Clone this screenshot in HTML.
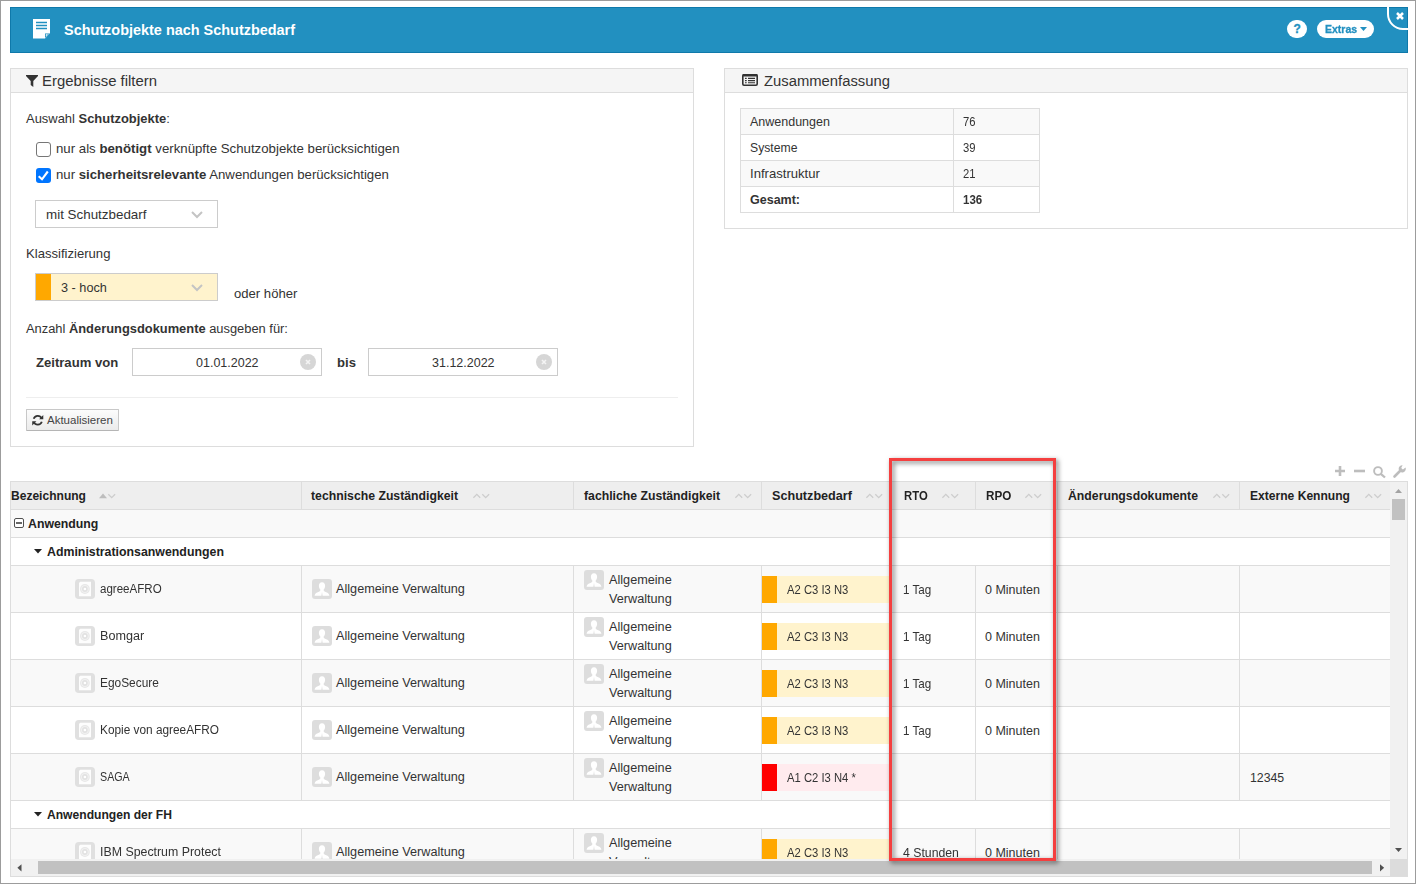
<!DOCTYPE html>
<html><head><meta charset="utf-8">
<style>
*{box-sizing:border-box;margin:0;padding:0}
html,body{width:1416px;height:884px;overflow:hidden;background:#fff}
body{font-family:"Liberation Sans",sans-serif;font-size:13px;color:#333;position:relative}
#frame{position:absolute;left:0;top:0;width:1416px;height:884px;border-style:solid;border-color:#9c9c9c;border-width:1px;z-index:50}
#hdr{position:absolute;left:10px;top:7px;width:1398px;height:46px;background:#2290c0;box-shadow:inset 0 0 0 1px #0f79aa;overflow:hidden}
.box{position:absolute}
.panel{position:absolute;border:1px solid #ddd;background:#fff}
.ph{position:absolute;left:0;top:0;right:0;height:24px;background:#f5f5f5;border-bottom:1px solid #ddd}
.t{position:absolute;white-space:nowrap;line-height:16px;height:16px;margin-top:1px}
b{font-weight:bold}
.f1{font-size:13.1px}
.f2{font-size:12.3px}
svg{position:absolute;overflow:visible}
</style></head><body>
<div id="frame"></div>

<!-- HEADER -->
<div id="hdr"><div class="box" style="left:1377px;top:-19px;width:40px;height:42px;border:2px solid #fff;border-bottom-left-radius:16px"></div></div>
<svg style="left:33px;top:19px" width="17" height="20" viewBox="0 0 17 20"><path d="M0 0H17V14L12 19.5H0Z" fill="#fff"/><path d="M3 3.5H14M3 6.5H14M3 9.5H14" stroke="#2290c0" stroke-width="1.3"/><path d="M12 14.5H16.5L12 19Z" fill="#2290c0"/><path d="M12.8 15.3H15L12.8 17.6Z" fill="#fff"/></svg>
<span class="t" style="left:64px;top:21px;color:#fff;font-weight:bold;font-size:14.45px">Schutzobjekte nach Schutzbedarf</span>
<div class="box" style="left:1287px;top:20px;width:20px;height:18px;border-radius:9px;background:#fff"></div>
<span class="t" style="left:1293.6px;top:20px;color:#2290c0;font-weight:bold;font-size:12px;-webkit-text-stroke:.3px #2290c0">?</span>
<div class="box" style="left:1317px;top:20px;width:57px;height:18px;border-radius:9px;background:#fff"></div>
<span class="t" style="left:1325px;top:20px;color:#2290c0;font-weight:bold;font-size:11.8px;transform:scaleX(.89);transform-origin:0 0;-webkit-text-stroke:.3px #2290c0">Extras</span>
<svg style="left:1359.6px;top:27px" width="7" height="4" viewBox="0 0 7 4"><path d="M0 0H7L3.5 4Z" fill="#2290c0"/></svg>
<svg style="left:1396px;top:12px" width="8" height="8" viewBox="0 0 8 8"><path d="M1 1L7 7M7 1L1 7" stroke="#fff" stroke-width="2.5"/></svg>

<!-- FILTER PANEL -->
<div class="panel" style="left:10px;top:68px;width:684px;height:379px"><div class="ph"></div></div>
<svg style="left:26px;top:74.5px" width="12" height="12" viewBox="0 0 12 12"><path d="M0 0H12V1L7.3 6V12L4.7 10V6L0 1Z" fill="#333"/></svg>
<span class="t" style="left:42px;top:72px;font-size:14.88px">Ergebnisse filtern</span>

<span class="t" style="left:26px;top:110px;font-size:12.95px">Auswahl <b>Schutzobjekte</b>:</span>
<div class="box" style="left:36px;top:142px;width:15px;height:15px;border:1.2px solid #767676;border-radius:3px;background:#fff"></div>
<span class="t" style="left:56px;top:140px;font-size:13.24px">nur als <b>benötigt</b> verknüpfte Schutzobjekte berücksichtigen</span>
<div class="box" style="left:36px;top:168px;width:15px;height:15px;border-radius:3px;background:#0075ff"></div>
<svg style="left:36px;top:168px" width="15" height="15" viewBox="0 0 15 15"><path d="M2.7 8.3L6 11.3L11.8 3.5" stroke="#fff" stroke-width="2.1" fill="none"/></svg>
<span class="t" style="left:56px;top:166px;font-size:13.2px">nur <b>sicherheitsrelevante</b> Anwendungen berücksichtigen</span>

<div class="box" style="left:35px;top:200px;width:183px;height:28px;border:1px solid #ccc;background:#fff"></div>
<span class="t" style="left:46px;top:206px;font-size:13.4px">mit Schutzbedarf</span>
<svg style="left:191px;top:210.5px" width="12" height="7" viewBox="0 0 12 7"><path d="M1 1L6 6L11 1" stroke="#c4c4c4" stroke-width="2" fill="none"/></svg>

<span class="t f1" style="left:26px;top:245px">Klassifizierung</span>
<div class="box" style="left:35px;top:273px;width:183px;height:28px;border:1px solid #ccc;background:#fff3cd"></div>
<div class="box" style="left:36px;top:274px;width:15px;height:26px;background:#ffa800"></div>
<span class="t" style="left:61px;top:279px;font-size:12.7px">3 - hoch</span>
<svg style="left:191px;top:283.5px" width="12" height="7" viewBox="0 0 12 7"><path d="M1 1L6 6L11 1" stroke="#c4c4c4" stroke-width="2" fill="none"/></svg>
<span class="t f1" style="left:234px;top:285px">oder höher</span>

<span class="t" style="left:26px;top:320px;font-size:12.88px">Anzahl <b>Änderungsdokumente</b> ausgeben für:</span>
<span class="t f1" style="left:36px;top:354px"><b>Zeitraum von</b></span>
<div class="box" style="left:132px;top:348px;width:190px;height:28px;border:1px solid #ccc;background:#fff"></div>
<span class="t" style="left:196px;top:354px;font-size:12.5px">01.01.2022</span>
<svg style="left:300px;top:354px" width="16" height="16" viewBox="0 0 16 16"><circle cx="8" cy="8" r="8" fill="#d6d6d6"/><path d="M6 6L10 10M10 6L6 10" stroke="#f4f4f4" stroke-width="1.6"/></svg>
<span class="t f1" style="left:337px;top:354px"><b>bis</b></span>
<div class="box" style="left:368px;top:348px;width:190px;height:28px;border:1px solid #ccc;background:#fff"></div>
<span class="t" style="left:432px;top:354px;font-size:12.5px">31.12.2022</span>
<svg style="left:536px;top:354px" width="16" height="16" viewBox="0 0 16 16"><circle cx="8" cy="8" r="8" fill="#d6d6d6"/><path d="M6 6L10 10M10 6L6 10" stroke="#f4f4f4" stroke-width="1.6"/></svg>

<div class="box" style="left:26px;top:397px;width:652px;height:1px;background:#eee"></div>
<div class="box" style="left:26px;top:409px;width:93px;height:22px;border:1px solid #c8c8c8;border-bottom-color:#b5b5b5;border-radius:1px;background:linear-gradient(#fcfcfc,#ebebeb)"></div>
<svg style="left:31.5px;top:413.5px" width="11.5" height="12.5" viewBox="0 0 11 12"><path d="M9.3 4.2A4.2 4.2 0 0 0 1.6 4.6M1.7 7.8A4.2 4.2 0 0 0 9.4 7.4" stroke="#333" stroke-width="1.7" fill="none"/><path d="M10.8 1V5H6.8Z M0.2 11V7H4.2Z" fill="#333"/></svg>
<span class="t" style="left:47px;top:411px;font-size:11.5px;color:#444">Aktualisieren</span>

<!-- SUMMARY PANEL -->
<div class="panel" style="left:724px;top:68px;width:684px;height:161px"><div class="ph"></div></div>
<svg style="left:742px;top:74px" width="16" height="12" viewBox="0 0 16 12"><rect x=".8" y=".8" width="14.4" height="10.4" rx="1.2" fill="none" stroke="#333" stroke-width="1.6"/><rect x=".5" y="0" width="15" height="2.6" rx="1" fill="#333"/><path d="M3 4.4H4.7M6 4.4H13M3 6.6H4.7M6 6.6H13M3 8.8H4.7M6 8.8H13" stroke="#333" stroke-width="1.1"/></svg>
<span class="t" style="left:764px;top:72px;font-size:14.82px">Zusammenfassung</span>
<div class="box" style="left:740px;top:108px;width:300px;height:105px;border:1px solid #ddd;background:#fff"></div>
<div class="box" style="left:741px;top:109px;width:298px;height:25px;background:#f9f9f9"></div>
<div class="box" style="left:741px;top:161px;width:298px;height:25px;background:#f9f9f9"></div>
<div class="box" style="left:741px;top:134px;width:298px;height:1px;background:#ddd"></div>
<div class="box" style="left:741px;top:160px;width:298px;height:1px;background:#ddd"></div>
<div class="box" style="left:741px;top:186px;width:298px;height:1px;background:#ddd"></div>
<div class="box" style="left:953px;top:109px;width:1px;height:103px;background:#ddd"></div>
<span class="t" style="left:750px;top:113px;font-size:12.5px">Anwendungen</span><span class="t" style="left:963px;top:113px;font-size:12.5px;transform:scaleX(.9);transform-origin:0 0">76</span>
<span class="t" style="left:750px;top:139px;font-size:12.2px">Systeme</span><span class="t" style="left:963px;top:139px;font-size:12.5px;transform:scaleX(.9);transform-origin:0 0">39</span>
<span class="t" style="left:750px;top:165px;font-size:13.1px">Infrastruktur</span><span class="t" style="left:963px;top:165px;font-size:12.5px;transform:scaleX(.9);transform-origin:0 0">21</span>
<span class="t" style="left:750px;top:191px;font-size:12.5px"><b>Gesamt:</b></span><span class="t" style="left:963px;top:191px;font-size:12.5px;transform:scaleX(.92);transform-origin:0 0"><b>136</b></span>

<!--TABLE-->
<svg style="left:1335px;top:466px" width="10" height="10" viewBox="0 0 10 10"><path d="M5 0V10M0 5H10" stroke="#bdbdbd" stroke-width="2.6"/></svg>
<svg style="left:1354px;top:466px" width="11" height="10" viewBox="0 0 11 10"><path d="M0 5H11" stroke="#bdbdbd" stroke-width="2.6"/></svg>
<svg style="left:1373px;top:466px" width="13" height="12" viewBox="0 0 13 12"><circle cx="5" cy="5" r="3.9" fill="none" stroke="#bdbdbd" stroke-width="1.9"/><path d="M7.8 7.8L12 11.5" stroke="#bdbdbd" stroke-width="2.2"/></svg>
<svg style="left:1393px;top:465px" width="13" height="13" viewBox="0 0 13 13"><path d="M1.5 11.5L7.5 5.5" stroke="#bdbdbd" stroke-width="2.6" stroke-linecap="round"/><path d="M12.6 2.6A3.6 3.6 0 1 1 9.6 0.3L8.2 2.9L9.9 4.6Z" fill="#bdbdbd"/></svg>
<div class="box" style="left:10px;top:481px;width:1381px;height:29px;background:#eee;border:1px solid #ddd"></div>
<div class="box" style="left:10px;top:510px;width:1px;height:349px;background:#ddd"></div>
<div class="box" style="left:11px;top:510px;width:1379px;height:27px;background:#f9f9f9"></div>
<div class="box" style="left:11px;top:537px;width:1379px;height:1px;background:#ddd"></div>
<div class="box" style="left:11px;top:538px;width:1379px;height:27px;background:#fff"></div>
<div class="box" style="left:11px;top:565px;width:1379px;height:1px;background:#ddd"></div>
<div class="box" style="left:11px;top:566px;width:1379px;height:46px;background:#f9f9f9"></div>
<div class="box" style="left:11px;top:612px;width:1379px;height:1px;background:#ddd"></div>
<div class="box" style="left:11px;top:613px;width:1379px;height:46px;background:#fff"></div>
<div class="box" style="left:11px;top:659px;width:1379px;height:1px;background:#ddd"></div>
<div class="box" style="left:11px;top:660px;width:1379px;height:46px;background:#f9f9f9"></div>
<div class="box" style="left:11px;top:706px;width:1379px;height:1px;background:#ddd"></div>
<div class="box" style="left:11px;top:707px;width:1379px;height:46px;background:#fff"></div>
<div class="box" style="left:11px;top:753px;width:1379px;height:1px;background:#ddd"></div>
<div class="box" style="left:11px;top:754px;width:1379px;height:46px;background:#f9f9f9"></div>
<div class="box" style="left:11px;top:800px;width:1379px;height:1px;background:#ddd"></div>
<div class="box" style="left:11px;top:801px;width:1379px;height:27px;background:#fff"></div>
<div class="box" style="left:11px;top:828px;width:1379px;height:1px;background:#ddd"></div>
<div class="box" style="left:11px;top:829px;width:1379px;height:30px;background:#f9f9f9"></div>
<div class="box" style="left:301px;top:482px;width:1px;height:27px;background:#ddd"></div>
<div class="box" style="left:573px;top:482px;width:1px;height:27px;background:#ddd"></div>
<div class="box" style="left:761px;top:482px;width:1px;height:27px;background:#ddd"></div>
<div class="box" style="left:891px;top:482px;width:1px;height:27px;background:#ddd"></div>
<div class="box" style="left:975px;top:482px;width:1px;height:27px;background:#ddd"></div>
<div class="box" style="left:1057px;top:482px;width:1px;height:27px;background:#ddd"></div>
<div class="box" style="left:1239px;top:482px;width:1px;height:27px;background:#ddd"></div>
<div class="box" style="left:301px;top:566px;width:1px;height:46px;background:#ddd"></div>
<div class="box" style="left:573px;top:566px;width:1px;height:46px;background:#ddd"></div>
<div class="box" style="left:761px;top:566px;width:1px;height:46px;background:#ddd"></div>
<div class="box" style="left:891px;top:566px;width:1px;height:46px;background:#ddd"></div>
<div class="box" style="left:975px;top:566px;width:1px;height:46px;background:#ddd"></div>
<div class="box" style="left:1057px;top:566px;width:1px;height:46px;background:#ddd"></div>
<div class="box" style="left:1239px;top:566px;width:1px;height:46px;background:#ddd"></div>
<div class="box" style="left:301px;top:613px;width:1px;height:46px;background:#ddd"></div>
<div class="box" style="left:573px;top:613px;width:1px;height:46px;background:#ddd"></div>
<div class="box" style="left:761px;top:613px;width:1px;height:46px;background:#ddd"></div>
<div class="box" style="left:891px;top:613px;width:1px;height:46px;background:#ddd"></div>
<div class="box" style="left:975px;top:613px;width:1px;height:46px;background:#ddd"></div>
<div class="box" style="left:1057px;top:613px;width:1px;height:46px;background:#ddd"></div>
<div class="box" style="left:1239px;top:613px;width:1px;height:46px;background:#ddd"></div>
<div class="box" style="left:301px;top:660px;width:1px;height:46px;background:#ddd"></div>
<div class="box" style="left:573px;top:660px;width:1px;height:46px;background:#ddd"></div>
<div class="box" style="left:761px;top:660px;width:1px;height:46px;background:#ddd"></div>
<div class="box" style="left:891px;top:660px;width:1px;height:46px;background:#ddd"></div>
<div class="box" style="left:975px;top:660px;width:1px;height:46px;background:#ddd"></div>
<div class="box" style="left:1057px;top:660px;width:1px;height:46px;background:#ddd"></div>
<div class="box" style="left:1239px;top:660px;width:1px;height:46px;background:#ddd"></div>
<div class="box" style="left:301px;top:707px;width:1px;height:46px;background:#ddd"></div>
<div class="box" style="left:573px;top:707px;width:1px;height:46px;background:#ddd"></div>
<div class="box" style="left:761px;top:707px;width:1px;height:46px;background:#ddd"></div>
<div class="box" style="left:891px;top:707px;width:1px;height:46px;background:#ddd"></div>
<div class="box" style="left:975px;top:707px;width:1px;height:46px;background:#ddd"></div>
<div class="box" style="left:1057px;top:707px;width:1px;height:46px;background:#ddd"></div>
<div class="box" style="left:1239px;top:707px;width:1px;height:46px;background:#ddd"></div>
<div class="box" style="left:301px;top:754px;width:1px;height:46px;background:#ddd"></div>
<div class="box" style="left:573px;top:754px;width:1px;height:46px;background:#ddd"></div>
<div class="box" style="left:761px;top:754px;width:1px;height:46px;background:#ddd"></div>
<div class="box" style="left:891px;top:754px;width:1px;height:46px;background:#ddd"></div>
<div class="box" style="left:975px;top:754px;width:1px;height:46px;background:#ddd"></div>
<div class="box" style="left:1057px;top:754px;width:1px;height:46px;background:#ddd"></div>
<div class="box" style="left:1239px;top:754px;width:1px;height:46px;background:#ddd"></div>
<div class="box" style="left:301px;top:829px;width:1px;height:30px;background:#ddd"></div>
<div class="box" style="left:573px;top:829px;width:1px;height:30px;background:#ddd"></div>
<div class="box" style="left:761px;top:829px;width:1px;height:30px;background:#ddd"></div>
<div class="box" style="left:891px;top:829px;width:1px;height:30px;background:#ddd"></div>
<div class="box" style="left:975px;top:829px;width:1px;height:30px;background:#ddd"></div>
<div class="box" style="left:1057px;top:829px;width:1px;height:30px;background:#ddd"></div>
<div class="box" style="left:1239px;top:829px;width:1px;height:30px;background:#ddd"></div>
<span class="t" style="left:11px;top:487px;font-size:12.05px;color:#222"><b>Bezeichnung</b></span>
<svg style="left:99px;top:493px" width="17" height="6" viewBox="0 0 17 6"><path d="M0 5.2L4 0.6L8 5.2Z" fill="#bdbdbd"/><path d="M9.3 1.2L12.7 4.6L16.1 1.2" stroke="#cdcdcd" stroke-width="1.3" fill="none"/></svg>
<span class="t" style="left:311px;top:487px;font-size:12.25px;color:#222"><b>technische Zuständigkeit</b></span>
<svg style="left:472.6px;top:493px" width="17" height="6" viewBox="0 0 17 6"><path d="M0.4 4.8L3.8 1.4L7.2 4.8" stroke="#cdcdcd" stroke-width="1.3" fill="none"/><path d="M9.3 1.2L12.7 4.6L16.1 1.2" stroke="#cdcdcd" stroke-width="1.3" fill="none"/></svg>
<span class="t" style="left:584px;top:487px;font-size:12.24px;color:#222"><b>fachliche Zuständigkeit</b></span>
<svg style="left:734.6px;top:493px" width="17" height="6" viewBox="0 0 17 6"><path d="M0.4 4.8L3.8 1.4L7.2 4.8" stroke="#cdcdcd" stroke-width="1.3" fill="none"/><path d="M9.3 1.2L12.7 4.6L16.1 1.2" stroke="#cdcdcd" stroke-width="1.3" fill="none"/></svg>
<span class="t" style="left:772px;top:487px;font-size:12.63px;color:#222"><b>Schutzbedarf</b></span>
<svg style="left:865.6px;top:493px" width="17" height="6" viewBox="0 0 17 6"><path d="M0.4 4.8L3.8 1.4L7.2 4.8" stroke="#cdcdcd" stroke-width="1.3" fill="none"/><path d="M9.3 1.2L12.7 4.6L16.1 1.2" stroke="#cdcdcd" stroke-width="1.3" fill="none"/></svg>
<span class="t" style="left:903.5px;top:487px;font-size:12.3px;color:#222;transform:scaleX(0.92);transform-origin:0 0"><b>RTO</b></span>
<svg style="left:941.6px;top:493px" width="17" height="6" viewBox="0 0 17 6"><path d="M0.4 4.8L3.8 1.4L7.2 4.8" stroke="#cdcdcd" stroke-width="1.3" fill="none"/><path d="M9.3 1.2L12.7 4.6L16.1 1.2" stroke="#cdcdcd" stroke-width="1.3" fill="none"/></svg>
<span class="t" style="left:985.5px;top:487px;font-size:12.3px;color:#222;transform:scaleX(0.95);transform-origin:0 0"><b>RPO</b></span>
<svg style="left:1024.6px;top:493px" width="17" height="6" viewBox="0 0 17 6"><path d="M0.4 4.8L3.8 1.4L7.2 4.8" stroke="#cdcdcd" stroke-width="1.3" fill="none"/><path d="M9.3 1.2L12.7 4.6L16.1 1.2" stroke="#cdcdcd" stroke-width="1.3" fill="none"/></svg>
<span class="t" style="left:1068px;top:487px;font-size:12.25px;color:#222"><b>Änderungsdokumente</b></span>
<svg style="left:1212.6px;top:493px" width="17" height="6" viewBox="0 0 17 6"><path d="M0.4 4.8L3.8 1.4L7.2 4.8" stroke="#cdcdcd" stroke-width="1.3" fill="none"/><path d="M9.3 1.2L12.7 4.6L16.1 1.2" stroke="#cdcdcd" stroke-width="1.3" fill="none"/></svg>
<span class="t" style="left:1250px;top:487px;font-size:12.08px;color:#222"><b>Externe Kennung</b></span>
<svg style="left:1364.6px;top:493px" width="17" height="6" viewBox="0 0 17 6"><path d="M0.4 4.8L3.8 1.4L7.2 4.8" stroke="#cdcdcd" stroke-width="1.3" fill="none"/><path d="M9.3 1.2L12.7 4.6L16.1 1.2" stroke="#cdcdcd" stroke-width="1.3" fill="none"/></svg>
<div class="box" style="left:14px;top:518px;width:10px;height:10px;border:1px solid #505050;border-radius:2px;background:#fff"></div><div class="box" style="left:16px;top:522px;width:6px;height:2px;background:#666"></div>
<span class="t" style="left:28px;top:515px;font-size:12.3px;color:#222"><b>Anwendung</b></span>
<svg style="left:34.2px;top:549px" width="8" height="5" viewBox="0 0 8 5"><path d="M0 0H8L4 4.6Z" fill="#222"/></svg>
<span class="t" style="left:47px;top:543px;font-size:12.35px;color:#222"><b>Administrationsanwendungen</b></span>
<svg style="left:34.2px;top:812px" width="8" height="5" viewBox="0 0 8 5"><path d="M0 0H8L4 4.6Z" fill="#222"/></svg>
<span class="t" style="left:47px;top:806px;font-size:12.1px;color:#222"><b>Anwendungen der FH</b></span>
<svg style="left:75px;top:579px" width="20" height="20" viewBox="0 0 20 20"><rect width="20" height="20" rx="3.8" fill="#e0e0e0"/><path d="M5.2 2.8H16V17.3H4V4Z" fill="#fdfdfd"/><circle cx="9.9" cy="10" r="4.9" fill="#e8e8e8"/><circle cx="9.9" cy="10" r="3.7" fill="#f4f4f4"/><circle cx="9.9" cy="10" r="2.9" fill="#e2e2e2"/><circle cx="9.9" cy="10" r="1.3" fill="#fff"/></svg>
<span class="t" style="left:100px;top:580px;font-size:12.3px;transform:scaleX(0.939);transform-origin:0 0">agreeAFRO</span>
<svg style="left:312px;top:579px" width="20" height="20" viewBox="0 0 20 20"><rect width="20" height="20" rx="3" fill="#ddd"/><path d="M10 3.2C12.2 3.2 13.3 4.9 13.1 7.2C13 8.8 12.3 10 11.5 10.7C11.6 12 12.5 12.6 14.2 13.2C16 13.9 17.2 14.6 17.4 16.8H10.6L10 13L9.4 16.8H2.6C2.8 14.6 4 13.9 5.8 13.2C7.5 12.6 8.4 12 8.5 10.7C7.7 10 7 8.8 6.9 7.2C6.7 4.9 7.8 3.2 10 3.2Z" fill="#fff"/></svg>
<span class="t" style="left:336px;top:580px;font-size:12.68px">Allgemeine Verwaltung</span>
<svg style="left:584px;top:570px" width="20" height="20" viewBox="0 0 20 20"><rect width="20" height="20" rx="3" fill="#ddd"/><path d="M10 3.2C12.2 3.2 13.3 4.9 13.1 7.2C13 8.8 12.3 10 11.5 10.7C11.6 12 12.5 12.6 14.2 13.2C16 13.9 17.2 14.6 17.4 16.8H10.6L10 13L9.4 16.8H2.6C2.8 14.6 4 13.9 5.8 13.2C7.5 12.6 8.4 12 8.5 10.7C7.7 10 7 8.8 6.9 7.2C6.7 4.9 7.8 3.2 10 3.2Z" fill="#fff"/></svg>
<span class="t" style="left:609px;top:571px;font-size:12.68px">Allgemeine</span>
<span class="t" style="left:609px;top:590px;font-size:12.68px">Verwaltung</span>
<div class="box" style="left:762px;top:576px;width:129px;height:27px;background:#fff3cd"></div>
<div class="box" style="left:762px;top:576px;width:15px;height:27px;background:#ffa800"></div>
<span class="t" style="left:787px;top:581px;font-size:12.5px;transform:scaleX(.9);transform-origin:0 0">A2 C3 I3 N3</span>
<span class="t" style="left:903px;top:581px;font-size:12.4px;transform:scaleX(0.94);transform-origin:0 0">1 Tag</span>
<span class="t" style="left:985px;top:581px;font-size:12.5px">0 Minuten</span>
<svg style="left:75px;top:626px" width="20" height="20" viewBox="0 0 20 20"><rect width="20" height="20" rx="3.8" fill="#e0e0e0"/><path d="M5.2 2.8H16V17.3H4V4Z" fill="#fdfdfd"/><circle cx="9.9" cy="10" r="4.9" fill="#e8e8e8"/><circle cx="9.9" cy="10" r="3.7" fill="#f4f4f4"/><circle cx="9.9" cy="10" r="2.9" fill="#e2e2e2"/><circle cx="9.9" cy="10" r="1.3" fill="#fff"/></svg>
<span class="t" style="left:100px;top:627px;font-size:12.3px;transform:scaleX(1.024);transform-origin:0 0">Bomgar</span>
<svg style="left:312px;top:626px" width="20" height="20" viewBox="0 0 20 20"><rect width="20" height="20" rx="3" fill="#ddd"/><path d="M10 3.2C12.2 3.2 13.3 4.9 13.1 7.2C13 8.8 12.3 10 11.5 10.7C11.6 12 12.5 12.6 14.2 13.2C16 13.9 17.2 14.6 17.4 16.8H10.6L10 13L9.4 16.8H2.6C2.8 14.6 4 13.9 5.8 13.2C7.5 12.6 8.4 12 8.5 10.7C7.7 10 7 8.8 6.9 7.2C6.7 4.9 7.8 3.2 10 3.2Z" fill="#fff"/></svg>
<span class="t" style="left:336px;top:627px;font-size:12.68px">Allgemeine Verwaltung</span>
<svg style="left:584px;top:617px" width="20" height="20" viewBox="0 0 20 20"><rect width="20" height="20" rx="3" fill="#ddd"/><path d="M10 3.2C12.2 3.2 13.3 4.9 13.1 7.2C13 8.8 12.3 10 11.5 10.7C11.6 12 12.5 12.6 14.2 13.2C16 13.9 17.2 14.6 17.4 16.8H10.6L10 13L9.4 16.8H2.6C2.8 14.6 4 13.9 5.8 13.2C7.5 12.6 8.4 12 8.5 10.7C7.7 10 7 8.8 6.9 7.2C6.7 4.9 7.8 3.2 10 3.2Z" fill="#fff"/></svg>
<span class="t" style="left:609px;top:618px;font-size:12.68px">Allgemeine</span>
<span class="t" style="left:609px;top:637px;font-size:12.68px">Verwaltung</span>
<div class="box" style="left:762px;top:623px;width:129px;height:27px;background:#fff3cd"></div>
<div class="box" style="left:762px;top:623px;width:15px;height:27px;background:#ffa800"></div>
<span class="t" style="left:787px;top:628px;font-size:12.5px;transform:scaleX(.9);transform-origin:0 0">A2 C3 I3 N3</span>
<span class="t" style="left:903px;top:628px;font-size:12.4px;transform:scaleX(0.94);transform-origin:0 0">1 Tag</span>
<span class="t" style="left:985px;top:628px;font-size:12.5px">0 Minuten</span>
<svg style="left:75px;top:673px" width="20" height="20" viewBox="0 0 20 20"><rect width="20" height="20" rx="3.8" fill="#e0e0e0"/><path d="M5.2 2.8H16V17.3H4V4Z" fill="#fdfdfd"/><circle cx="9.9" cy="10" r="4.9" fill="#e8e8e8"/><circle cx="9.9" cy="10" r="3.7" fill="#f4f4f4"/><circle cx="9.9" cy="10" r="2.9" fill="#e2e2e2"/><circle cx="9.9" cy="10" r="1.3" fill="#fff"/></svg>
<span class="t" style="left:100px;top:674px;font-size:12.3px;transform:scaleX(0.967);transform-origin:0 0">EgoSecure</span>
<svg style="left:312px;top:673px" width="20" height="20" viewBox="0 0 20 20"><rect width="20" height="20" rx="3" fill="#ddd"/><path d="M10 3.2C12.2 3.2 13.3 4.9 13.1 7.2C13 8.8 12.3 10 11.5 10.7C11.6 12 12.5 12.6 14.2 13.2C16 13.9 17.2 14.6 17.4 16.8H10.6L10 13L9.4 16.8H2.6C2.8 14.6 4 13.9 5.8 13.2C7.5 12.6 8.4 12 8.5 10.7C7.7 10 7 8.8 6.9 7.2C6.7 4.9 7.8 3.2 10 3.2Z" fill="#fff"/></svg>
<span class="t" style="left:336px;top:674px;font-size:12.68px">Allgemeine Verwaltung</span>
<svg style="left:584px;top:664px" width="20" height="20" viewBox="0 0 20 20"><rect width="20" height="20" rx="3" fill="#ddd"/><path d="M10 3.2C12.2 3.2 13.3 4.9 13.1 7.2C13 8.8 12.3 10 11.5 10.7C11.6 12 12.5 12.6 14.2 13.2C16 13.9 17.2 14.6 17.4 16.8H10.6L10 13L9.4 16.8H2.6C2.8 14.6 4 13.9 5.8 13.2C7.5 12.6 8.4 12 8.5 10.7C7.7 10 7 8.8 6.9 7.2C6.7 4.9 7.8 3.2 10 3.2Z" fill="#fff"/></svg>
<span class="t" style="left:609px;top:665px;font-size:12.68px">Allgemeine</span>
<span class="t" style="left:609px;top:684px;font-size:12.68px">Verwaltung</span>
<div class="box" style="left:762px;top:670px;width:129px;height:27px;background:#fff3cd"></div>
<div class="box" style="left:762px;top:670px;width:15px;height:27px;background:#ffa800"></div>
<span class="t" style="left:787px;top:675px;font-size:12.5px;transform:scaleX(.9);transform-origin:0 0">A2 C3 I3 N3</span>
<span class="t" style="left:903px;top:675px;font-size:12.4px;transform:scaleX(0.94);transform-origin:0 0">1 Tag</span>
<span class="t" style="left:985px;top:675px;font-size:12.5px">0 Minuten</span>
<svg style="left:75px;top:720px" width="20" height="20" viewBox="0 0 20 20"><rect width="20" height="20" rx="3.8" fill="#e0e0e0"/><path d="M5.2 2.8H16V17.3H4V4Z" fill="#fdfdfd"/><circle cx="9.9" cy="10" r="4.9" fill="#e8e8e8"/><circle cx="9.9" cy="10" r="3.7" fill="#f4f4f4"/><circle cx="9.9" cy="10" r="2.9" fill="#e2e2e2"/><circle cx="9.9" cy="10" r="1.3" fill="#fff"/></svg>
<span class="t" style="left:100px;top:721px;font-size:12.3px;transform:scaleX(0.962);transform-origin:0 0">Kopie von agreeAFRO</span>
<svg style="left:312px;top:720px" width="20" height="20" viewBox="0 0 20 20"><rect width="20" height="20" rx="3" fill="#ddd"/><path d="M10 3.2C12.2 3.2 13.3 4.9 13.1 7.2C13 8.8 12.3 10 11.5 10.7C11.6 12 12.5 12.6 14.2 13.2C16 13.9 17.2 14.6 17.4 16.8H10.6L10 13L9.4 16.8H2.6C2.8 14.6 4 13.9 5.8 13.2C7.5 12.6 8.4 12 8.5 10.7C7.7 10 7 8.8 6.9 7.2C6.7 4.9 7.8 3.2 10 3.2Z" fill="#fff"/></svg>
<span class="t" style="left:336px;top:721px;font-size:12.68px">Allgemeine Verwaltung</span>
<svg style="left:584px;top:711px" width="20" height="20" viewBox="0 0 20 20"><rect width="20" height="20" rx="3" fill="#ddd"/><path d="M10 3.2C12.2 3.2 13.3 4.9 13.1 7.2C13 8.8 12.3 10 11.5 10.7C11.6 12 12.5 12.6 14.2 13.2C16 13.9 17.2 14.6 17.4 16.8H10.6L10 13L9.4 16.8H2.6C2.8 14.6 4 13.9 5.8 13.2C7.5 12.6 8.4 12 8.5 10.7C7.7 10 7 8.8 6.9 7.2C6.7 4.9 7.8 3.2 10 3.2Z" fill="#fff"/></svg>
<span class="t" style="left:609px;top:712px;font-size:12.68px">Allgemeine</span>
<span class="t" style="left:609px;top:731px;font-size:12.68px">Verwaltung</span>
<div class="box" style="left:762px;top:717px;width:129px;height:27px;background:#fff3cd"></div>
<div class="box" style="left:762px;top:717px;width:15px;height:27px;background:#ffa800"></div>
<span class="t" style="left:787px;top:722px;font-size:12.5px;transform:scaleX(.9);transform-origin:0 0">A2 C3 I3 N3</span>
<span class="t" style="left:903px;top:722px;font-size:12.4px;transform:scaleX(0.94);transform-origin:0 0">1 Tag</span>
<span class="t" style="left:985px;top:722px;font-size:12.5px">0 Minuten</span>
<svg style="left:75px;top:767px" width="20" height="20" viewBox="0 0 20 20"><rect width="20" height="20" rx="3.8" fill="#e0e0e0"/><path d="M5.2 2.8H16V17.3H4V4Z" fill="#fdfdfd"/><circle cx="9.9" cy="10" r="4.9" fill="#e8e8e8"/><circle cx="9.9" cy="10" r="3.7" fill="#f4f4f4"/><circle cx="9.9" cy="10" r="2.9" fill="#e2e2e2"/><circle cx="9.9" cy="10" r="1.3" fill="#fff"/></svg>
<span class="t" style="left:100px;top:768px;font-size:12.3px;transform:scaleX(0.87);transform-origin:0 0">SAGA</span>
<svg style="left:312px;top:767px" width="20" height="20" viewBox="0 0 20 20"><rect width="20" height="20" rx="3" fill="#ddd"/><path d="M10 3.2C12.2 3.2 13.3 4.9 13.1 7.2C13 8.8 12.3 10 11.5 10.7C11.6 12 12.5 12.6 14.2 13.2C16 13.9 17.2 14.6 17.4 16.8H10.6L10 13L9.4 16.8H2.6C2.8 14.6 4 13.9 5.8 13.2C7.5 12.6 8.4 12 8.5 10.7C7.7 10 7 8.8 6.9 7.2C6.7 4.9 7.8 3.2 10 3.2Z" fill="#fff"/></svg>
<span class="t" style="left:336px;top:768px;font-size:12.68px">Allgemeine Verwaltung</span>
<svg style="left:584px;top:758px" width="20" height="20" viewBox="0 0 20 20"><rect width="20" height="20" rx="3" fill="#ddd"/><path d="M10 3.2C12.2 3.2 13.3 4.9 13.1 7.2C13 8.8 12.3 10 11.5 10.7C11.6 12 12.5 12.6 14.2 13.2C16 13.9 17.2 14.6 17.4 16.8H10.6L10 13L9.4 16.8H2.6C2.8 14.6 4 13.9 5.8 13.2C7.5 12.6 8.4 12 8.5 10.7C7.7 10 7 8.8 6.9 7.2C6.7 4.9 7.8 3.2 10 3.2Z" fill="#fff"/></svg>
<span class="t" style="left:609px;top:759px;font-size:12.68px">Allgemeine</span>
<span class="t" style="left:609px;top:778px;font-size:12.68px">Verwaltung</span>
<div class="box" style="left:762px;top:764px;width:129px;height:27px;background:#ffebee"></div>
<div class="box" style="left:762px;top:764px;width:15px;height:27px;background:#ff0000"></div>
<span class="t" style="left:787px;top:769px;font-size:12.5px;transform:scaleX(.9);transform-origin:0 0">A1 C2 I3 N4 *</span>
<span class="t" style="left:1250px;top:769px;font-size:12.3px">12345</span>
<svg style="left:75px;top:842px" width="20" height="20" viewBox="0 0 20 20"><rect width="20" height="20" rx="3.8" fill="#e0e0e0"/><path d="M5.2 2.8H16V17.3H4V4Z" fill="#fdfdfd"/><circle cx="9.9" cy="10" r="4.9" fill="#e8e8e8"/><circle cx="9.9" cy="10" r="3.7" fill="#f4f4f4"/><circle cx="9.9" cy="10" r="2.9" fill="#e2e2e2"/><circle cx="9.9" cy="10" r="1.3" fill="#fff"/></svg>
<span class="t" style="left:100px;top:843px;font-size:12.3px;transform:scaleX(1.005);transform-origin:0 0">IBM Spectrum Protect</span>
<svg style="left:312px;top:842px" width="20" height="20" viewBox="0 0 20 20"><rect width="20" height="20" rx="3" fill="#ddd"/><path d="M10 3.2C12.2 3.2 13.3 4.9 13.1 7.2C13 8.8 12.3 10 11.5 10.7C11.6 12 12.5 12.6 14.2 13.2C16 13.9 17.2 14.6 17.4 16.8H10.6L10 13L9.4 16.8H2.6C2.8 14.6 4 13.9 5.8 13.2C7.5 12.6 8.4 12 8.5 10.7C7.7 10 7 8.8 6.9 7.2C6.7 4.9 7.8 3.2 10 3.2Z" fill="#fff"/></svg>
<span class="t" style="left:336px;top:843px;font-size:12.68px">Allgemeine Verwaltung</span>
<svg style="left:584px;top:833px" width="20" height="20" viewBox="0 0 20 20"><rect width="20" height="20" rx="3" fill="#ddd"/><path d="M10 3.2C12.2 3.2 13.3 4.9 13.1 7.2C13 8.8 12.3 10 11.5 10.7C11.6 12 12.5 12.6 14.2 13.2C16 13.9 17.2 14.6 17.4 16.8H10.6L10 13L9.4 16.8H2.6C2.8 14.6 4 13.9 5.8 13.2C7.5 12.6 8.4 12 8.5 10.7C7.7 10 7 8.8 6.9 7.2C6.7 4.9 7.8 3.2 10 3.2Z" fill="#fff"/></svg>
<span class="t" style="left:609px;top:834px;font-size:12.68px">Allgemeine</span>
<span class="t" style="left:609px;top:853px;font-size:12.68px">Verwaltung</span>
<div class="box" style="left:762px;top:839px;width:129px;height:27px;background:#fff3cd"></div>
<div class="box" style="left:762px;top:839px;width:15px;height:27px;background:#ffa800"></div>
<span class="t" style="left:787px;top:844px;font-size:12.5px;transform:scaleX(.9);transform-origin:0 0">A2 C3 I3 N3</span>
<span class="t" style="left:903px;top:844px;font-size:12.4px;transform:scaleX(0.99);transform-origin:0 0">4 Stunden</span>
<span class="t" style="left:985px;top:844px;font-size:12.5px">0 Minuten</span>
<div class="box" style="left:0;top:859px;width:1416px;height:25px;background:#fff"></div>
<div class="box" style="left:1390px;top:481px;width:18px;height:378px;background:#f1f1f1;border-right:1px solid #ddd;border-top:1px solid #ddd"></div>
<svg style="left:1395px;top:488.5px" width="7" height="4" viewBox="0 0 7 4"><path d="M0 4H7L3.5 0Z" fill="#a3a3a3"/></svg>
<div class="box" style="left:1392px;top:499px;width:13px;height:21px;background:#c1c1c1"></div>
<svg style="left:1395px;top:848px" width="7" height="4" viewBox="0 0 7 4"><path d="M0 0H7L3.5 4Z" fill="#505050"/></svg>
<div class="box" style="left:10px;top:859px;width:1398px;height:18px;background:#f1f1f1;border:1px solid #ddd;border-top:0"></div>
<div class="box" style="left:1390px;top:859px;width:17px;height:17px;background:#dcdcdc"></div>
<svg style="left:16.8px;top:863.7px" width="4.5" height="7.6" viewBox="0 0 5 8"><path d="M5 0V8L0.4 4Z" fill="#505050"/></svg>
<svg style="left:1379.8px;top:863.7px" width="4.5" height="7.6" viewBox="0 0 5 8"><path d="M0 0V8L4.6 4Z" fill="#505050"/></svg>
<div class="box" style="left:38px;top:861px;width:1334px;height:13px;background:#c1c1c1"></div>
<div class="box" style="left:889px;top:458px;width:167px;height:403px;border:3px solid #f43f3f;filter:drop-shadow(2px 2px 2.5px rgba(0,0,0,.55))"></div>
<!--/TABLE-->
</body></html>
